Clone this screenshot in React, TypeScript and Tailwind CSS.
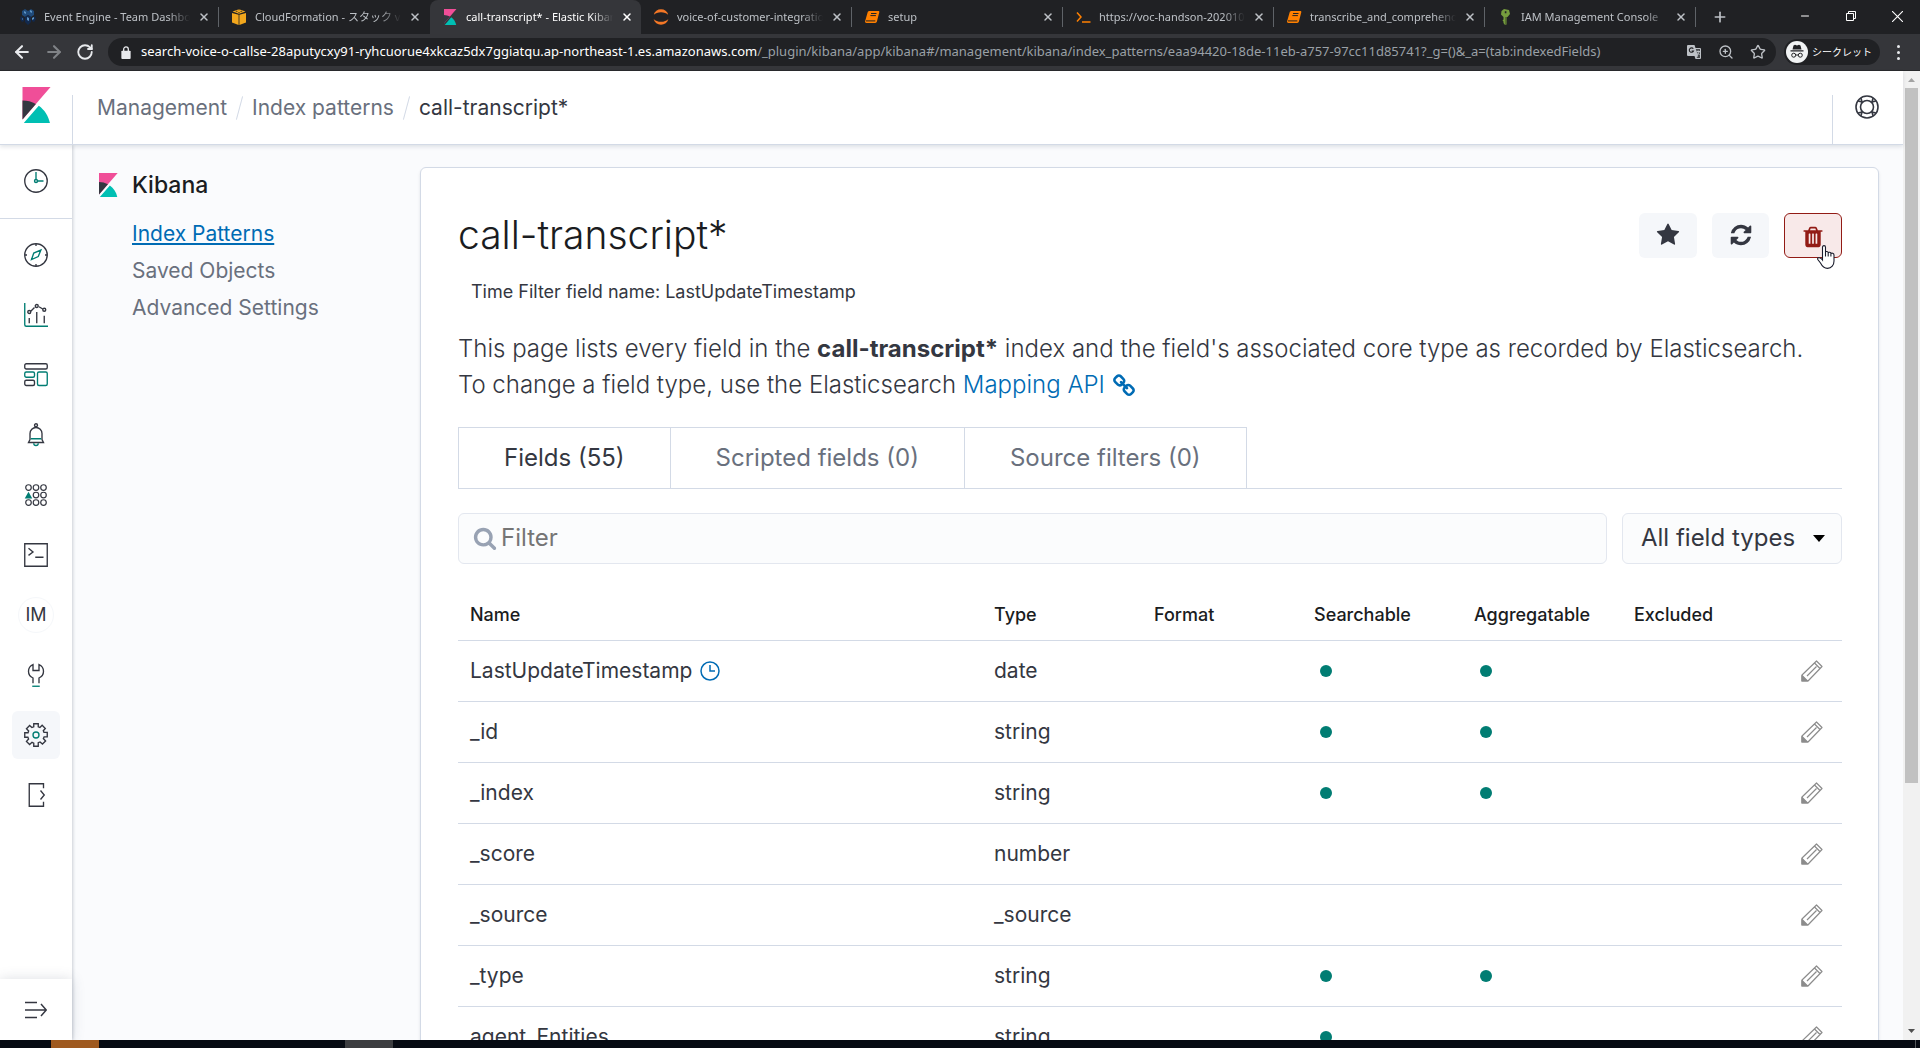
import type { ReactNode } from 'react';
import { ArrowLeft, ArrowRight, RotateCw, Star, ZoomIn, X, Plus, Minus } from 'lucide-react';

const chromeFont = "font-['Noto_Sans','Noto_Sans_CJK_JP',sans-serif]";

/* ---------- logos ---------- */

function KibanaLogo({ className }: { className: string }) {
  return (
    <svg viewBox="0 0 32 32" className={className} aria-hidden="true">
      <path fill="#F04E98" d="M4 0v28.789L28.935.017z" />
      <path fill="#343741" d="M4 12v16.789l11.906-13.738A24.721 24.721 0 004 12" />
      <path fill="#00BFB3" d="M18.479 16.664L6.268 30.754l-1.073 1.237h23.191c-1.252-6.292-4.883-11.719-9.908-15.327" />
    </svg>
  );
}

function EventEngineFavicon() {
  return (
    <svg viewBox="0 0 16 16" className="size-4">
      <path fill="#1f4a7a" d="M5 0l3 2v4L5 8 2 6V2zM11 0l3 2v4l-3 2-3-2V2z" />
      <path fill="#12294d" d="M8 6l3 2v5l-3 3-3-3V8zM1 7l3 2v3l-2 1-2-3zM15 7l-3 2v3l2 1 2-3z" />
      <path fill="#5d93c4" d="M4 2l2 1v2L4 4zM10 1l2 1v2l-2-1zM7 8l2 1v3L7 11zM12 9l2-1v2l-2 1zM2 9l1 1v1l-1-1z" />
    </svg>
  );
}

function AwsFavicon() {
  return (
    <svg viewBox="0 0 16 16" className="size-4">
      <path fill="#F2A71D" d="M1 4l6.600 1.800V16L1 13.500zM15 4L8.400 5.800V16L15 13.500zM8 .2L14.500 2.500 8 4.700 1.500 2.500z" />
      <path fill="#202124" d="M4.500 2.200l1.200-.4 1.300.5-1.200.4zM9 2.300l1.300-.5 1.200.4-1.300.5zM7 1l1-.4 1 .4-1 .3zM7 3.500l1-.4 1 .4-1 .4z" />
    </svg>
  );
}

function JupyterFavicon() {
  return (
    <svg viewBox="0 0 16 16" className="size-4">
      <path fill="#F37726" d="M.6 6C1.600 2.200 4.500.3 8 .3s6.400 1.900 7.400 5.700C13.600 4.100 11 3.200 8 3.200S2.400 4.100.6 6z" />
      <path fill="#F37726" d="M.6 10c1 3.800 3.900 5.700 7.400 5.700s6.400-1.900 7.400-5.700c-1.800 1.900-4.400 2.800-7.400 2.800S2.400 11.900.6 10z" />
    </svg>
  );
}

function BookFavicon() {
  return (
    <svg viewBox="0 0 16 16" className="size-4">
      <path fill="#FF8000" d="M5.500 2h8.800c.9 0 1.200.6 1 1.300l-2.400 9.300c-.2.800-.8 1.400-1.700 1.400H2.500c-.9 0-1.700-.7-1.400-1.700L3.600 3.400C3.800 2.600 4.600 2 5.500 2z" />
      <path stroke="#202124" strokeWidth="1" fill="none" d="M7 4.500h5.500M6.400 6.600h5.500M2 11.900h9.300" />
    </svg>
  );
}

function TerminalFavicon() {
  return (
    <svg viewBox="0 0 16 16" className="size-4" fill="none" stroke="#FF8000" strokeWidth="1.500">
      <path d="M2 3.500L6 8l-4 4.500M7 13h8.500" />
    </svg>
  );
}

function KeyFavicon() {
  return (
    <svg viewBox="0 0 16 16" className="size-4">
      <path fill="#759C3E" fillRule="evenodd" d="M7 0l5 1 1 4-2.500 3H10v7l-2 1-1.500-2V12.500l-1-1 1-1V8L4 5.500 4.500 2zM7.800 2.200v2h1.600v-2z" />
      <path fill="#4B612C" d="M8.300 8h1.700v7l-1.700 1z" />
    </svg>
  );
}

/* ---------- browser ---------- */

type Tab = { title: string; icon: ReactNode; active?: boolean; rule?: boolean };

const tabs: Tab[] = [
  { title: 'Event Engine - Team Dashbo', icon: <EventEngineFavicon />, rule: true },
  { title: 'CloudFormation - スタック vo', icon: <AwsFavicon /> },
  { title: 'call-transcript* - Elastic Kibana', icon: <KibanaLogo className="size-4" />, active: true },
  { title: 'voice-of-customer-integratio', icon: <JupyterFavicon />, rule: true },
  { title: 'setup', icon: <BookFavicon />, rule: true },
  { title: 'https://voc-handson-202010', icon: <TerminalFavicon />, rule: true },
  { title: 'transcribe_and_comprehend', icon: <BookFavicon />, rule: true },
  { title: 'IAM Management Console', icon: <KeyFavicon />, rule: true },
];

function TabStrip() {
  return (
    <div className="flex h-[34px] items-stretch bg-[#202124] pl-2 text-[#bdc1c6]">
      {tabs.map((tab, i) => (
        <div
          key={i}
          className={
            tab.active
              ? 'flex min-w-0 flex-[0_1_211px] items-center gap-2 rounded-t-lg bg-[#35363a] pr-2 pl-3 text-white'
              : 'flex min-w-0 flex-[0_1_211px] items-center gap-2 pl-3'
          }
        >
          <span className="shrink-0">{tab.icon}</span>
          <span className="flex-1 overflow-hidden text-[11px] whitespace-nowrap [mask-image:linear-gradient(to_right,black_85%,transparent)]">
            {tab.title}
          </span>
          <button aria-label={`Close ${tab.title}`} className="shrink-0">
            <X className="size-3" strokeWidth={3} />
          </button>
          {!tab.active && <span className={tab.rule ? 'h-5 w-px bg-[#5f6368]' : 'h-5 w-px'} />}
        </div>
      ))}
      <button aria-label="New tab" className="pl-4">
        <Plus className="size-4" strokeWidth={2.5} />
      </button>
      <div className="ml-auto flex h-8 items-center text-white">
        <button aria-label="Minimize" className="flex w-[46px] justify-center">
          <Minus className="size-3" />
        </button>
        <button aria-label="Restore" className="flex w-[46px] justify-center">
          <svg viewBox="0 0 10 10" className="size-[10px]" fill="none" stroke="currentColor">
            <path d="M.5 2.500h7v7h-7zM2.500 2.500v-2h7v7h-2" />
          </svg>
        </button>
        <button aria-label="Close window" className="flex w-[46px] justify-center">
          <svg viewBox="0 0 10 10" className="size-[11px]" fill="none" stroke="currentColor">
            <path d="M0 0l10 10M10 0L0 10" />
          </svg>
        </button>
      </div>
    </div>
  );
}

function TranslateIcon() {
  return (
    <svg viewBox="0 0 16 16" className="size-4">
      <path fill="#bdc1c6" d="M2 1h6.500l1 3H14a1 1 0 011 1v9a1 1 0 01-1 1H9.500l-1-3H2a1 1 0 01-1-1V2a1 1 0 011-1z" />
      <path fill="#202124" d="M9.800 5H14v9h-3.500l1.500-2z" opacity=".75" />
      <path fill="none" stroke="#202124" strokeWidth="1.100" d="M7.300 4.800A2.200 2.200 0 107.500 7H5.600" />
      <path fill="none" stroke="#bdc1c6" d="M10.500 7.500h3.500M12.200 6.500v1M13.300 7.500c-.3 1.500-1.300 2.600-2.300 3.300M11 8.500l2.500 2.500" />
    </svg>
  );
}

function IncognitoBadge() {
  return (
    <svg viewBox="0 0 22 22" className="size-[22px] shrink-0">
      <circle cx="11" cy="11" r="11" fill="#f1f3f4" />
      <path fill="#202124" d="M7.500 4.500l1.500-.7 2 .6 2-.6 1.500.7 1 4h-9zM4.500 9.200h13v1.200h-13z" />
      <g fill="none" stroke="#202124">
        <circle cx="7.700" cy="14.200" r="2" />
        <circle cx="14.300" cy="14.200" r="2" />
        <path d="M9.700 14h2.600" />
      </g>
    </svg>
  );
}

function Toolbar() {
  return (
    <div className="flex h-[37px] items-center gap-2 border-b border-[#28292c] bg-[#35363a] pr-3 pl-3 text-[#e8eaed]">
      <button aria-label="Back" className="w-6">
        <ArrowLeft className="size-5" strokeWidth={2.5} />
      </button>
      <button aria-label="Forward" className="w-6 text-[#808387]">
        <ArrowRight className="size-5" strokeWidth={2.5} />
      </button>
      <button aria-label="Reload" className="w-6">
        <RotateCw className="size-[18px]" strokeWidth={2.5} />
      </button>
      <div className="flex h-7 min-w-0 flex-1 items-center rounded-full bg-[#202124] pr-[10px] pl-[13px]">
        <svg viewBox="0 0 10 14" className="h-[13px] w-[10px] shrink-0">
          <rect y="5" width="10" height="9" rx="1" fill="#e8eaed" />
          <path d="M2.500 6V3.500a2.500 2.500 0 015 0V6" fill="none" stroke="#e8eaed" strokeWidth="1.400" />
        </svg>
        <div className="ml-[10px] min-w-0 flex-1 text-[13px] whitespace-nowrap text-[#9aa0a6]">
          <span className="text-white">search-voice-o-callse-28aputycxy91-ryhcuorue4xkcaz5dx7ggiatqu.ap-northeast-1.es.amazonaws.com</span>
          /_plugin/kibana/app/kibana#/management/kibana/index_patterns/eaa94420-18de-11eb-a757-97cc11d85741?_g=()&amp;_a=(tab:indexedFields)
        </div>
        <div className="flex shrink-0 items-center gap-4 text-[#bdc1c6]">
          <button aria-label="Translate"><TranslateIcon /></button>
          <button aria-label="Zoom"><ZoomIn className="size-4" /></button>
          <button aria-label="Bookmark"><Star className="size-4" /></button>
        </div>
      </div>
      <div className="flex h-[26px] items-center gap-1 rounded-full bg-[#202124] pr-2 pl-[2px] text-[10px] whitespace-nowrap text-white">
        <IncognitoBadge />
        <span>シークレット</span>
      </div>
      <button aria-label="Chrome menu" className="flex w-5 flex-col items-center gap-[3px]">
        <span className="size-[3px] rounded-full bg-current" />
        <span className="size-[3px] rounded-full bg-current" />
        <span className="size-[3px] rounded-full bg-current" />
      </button>
    </div>
  );
}

/* ---------- side navigation icons ---------- */

const ink = '#343741';
const teal = '#017D73';

function NavSvg({ children }: { children: ReactNode }) {
  return (
    <svg viewBox="0 0 32 32" className="size-6" fill="none" stroke={ink} strokeWidth="1.800" aria-hidden="true">
      {children}
    </svg>
  );
}

const gearPath =
  'M13 1h6v4.200l2.200.9 3-3 4.200 4.200-2.700 3 .9 2.200H31v6h-4.200l-1 2.200 3 3.200-4.200 4.200-3.200-2.800-2.400.9V31h-6v-4.200l-2.300-1-3.200 2.900-4.200-4.200 2.800-3.100-.9-2.400H1v-6h4.400l.8-2.400-2.900-3L7.500 3.300l3 2.800 2.500-.9z';

const navIcons: Record<string, ReactNode> = {
  recent: (
    <NavSvg>
      <circle cx="16" cy="16" r="15" />
      <g stroke={teal}>
        <circle cx="16" cy="16" r="2" />
        <path d="M16 14V4M18 16h8" />
      </g>
    </NavSvg>
  ),
  discover: (
    <NavSvg>
      <circle cx="16" cy="16" r="15" />
      <path d="M16 1v3M16 28v3M1 16h3M28 16h3" />
      <path stroke={teal} d="M10 22l3-8.500L22.500 9.500 19 18z" />
    </NavSvg>
  ),
  visualize: (
    <NavSvg>
      <path stroke={teal} d="M1 0v29a2 2 0 002 2h29" />
      <path d="M7 20v7M17 12v15M27 17v10M9 11l5-5M20 5l5 3" />
      <circle cx="7" cy="12" r="2" />
      <circle cx="17" cy="4" r="2" />
      <circle cx="27" cy="9" r="2" />
    </NavSvg>
  ),
  dashboard: (
    <NavSvg>
      <rect x="1" y="1" width="30" height="7" rx="2" />
      <rect x="1" y="23" width="13" height="7" rx="2" />
      <rect x="1" y="12" width="13" height="7" rx="2" stroke={teal} />
      <rect x="18" y="12" width="13" height="18" rx="2" stroke={teal} />
    </NavSvg>
  ),
  alerting: (
    <NavSvg>
      <circle cx="16" cy="3" r="2" />
      <path d="M6 26l2-4v-8a8 8 0 0116 0v8l2 4z" />
      <path stroke={teal} d="M9 21h14M13 27a3 3 0 006 0" />
    </NavSvg>
  ),
  anomaly: (
    <NavSvg>
      {[6, 16, 26].map((y) =>
        [6, 16, 26].map((x) => (x === 6 && y === 16 ? null : <circle key={`${x}-${y}`} cx={x} cy={y} r="3.700" strokeWidth="1.600" />)),
      )}
      <path fill={teal} stroke="none" d="M6 11.500l5 9H1z" />
    </NavSvg>
  ),
  console: (
    <NavSvg>
      <path d="M1 1h30v30H1zM6 7l6 5-6 4.500M15 19h11" />
    </NavSvg>
  ),
  tools: (
    <NavSvg>
      <path d="M20 27v-7c3.500-1.500 6-4.500 6-9 0-4-2-7-6-9v8h-8V2c-4 2-6 5-6 9 0 4.500 2.500 7.500 6 9v7" />
      <path stroke={teal} d="M11 31h10" />
    </NavSvg>
  ),
  management: (
    <NavSvg>
      <path d={gearPath} />
      <circle cx="16" cy="16" r="4" stroke={teal} />
    </NavSvg>
  ),
  logout: (
    <NavSvg>
      <path d="M26 7V1H7v30h19v-6M22 10l5 6-5 6" />
    </NavSvg>
  ),
};

const navItems = [
  { id: 'discover', label: 'Discover' },
  { id: 'visualize', label: 'Visualize' },
  { id: 'dashboard', label: 'Dashboard' },
  { id: 'alerting', label: 'Alerting' },
  { id: 'anomaly', label: 'Anomaly Detection' },
  { id: 'console', label: 'Console' },
  { id: 'im', label: 'Index Management' },
  { id: 'tools', label: 'Dev Tools' },
  { id: 'management', label: 'Management' },
  { id: 'logout', label: 'Log out' },
];

function SideNav() {
  return (
    <nav className="z-10 flex w-[72px] shrink-0 flex-col bg-white shadow-[1px_0_3px_rgba(65,78,101,0.25)]">
      <div className="flex h-[74px] items-center justify-center border-b border-[#d3dae6] pb-[2px]">
        <button aria-label="Recently viewed">{navIcons.recent}</button>
      </div>
      <ul className="flex flex-1 flex-col items-center gap-3 pt-3">
        {navItems.map((item) => (
          <li key={item.id}>
            <a
              href={`#${item.id}`}
              aria-label={item.label}
              className={
                item.id === 'management'
                  ? 'flex size-12 items-center justify-center rounded-md bg-[#f5f7fa]'
                  : 'flex size-12 items-center justify-center'
              }
            >
              {item.id === 'im' ? (
                <span className="flex size-9 items-center justify-center rounded-full border border-[#f5f7fa] text-lg text-[#343741]">IM</span>
              ) : (
                navIcons[item.id]
              )}
            </a>
          </li>
        ))}
      </ul>
      <button aria-label="Expand navigation" className="flex h-[61px] items-center justify-center bg-white shadow-[0_0_12px_rgba(65,78,101,0.18)]">
        <svg viewBox="0 0 22 18" className="h-[18px] w-[22px]" fill="none" stroke={ink} strokeWidth="1.500">
          <path d="M0 1.500h12M0 9h21M0 16.500h12M16 3l5.300 6L16 15" />
        </svg>
      </button>
    </nav>
  );
}

/* ---------- page header ---------- */

function Header() {
  return (
    <header className="z-20 flex h-[74px] shrink-0 items-stretch border-b border-[#d3dae6] bg-white shadow-[0_2px_4px_rgba(65,78,101,0.15)]">
      <a href="#home" aria-label="Kibana home" className="flex w-[72px] items-center justify-center pb-[6px]">
        <KibanaLogo className="size-9" />
      </a>
      <div className="mt-6 w-px bg-[#d3dae6]" />
      <nav aria-label="Breadcrumb" className="flex flex-1 items-center gap-3 pl-6 text-[21px] text-[#69707d]">
        <a href="#management">Management</a>
        <span className="h-6 w-px rotate-[15deg] bg-[#d3dae6]" />
        <a href="#patterns">Index patterns</a>
        <span className="h-6 w-px rotate-[15deg] bg-[#d3dae6]" />
        <span className="text-[#343741]">call-transcript*</span>
      </nav>
      <div className="mt-6 w-px bg-[#d3dae6]" />
      <button aria-label="Help" className="flex w-[70px] items-center justify-center pr-[2px] pb-[2px]">
        <svg viewBox="0 0 24 24" className="size-6" fill="none" stroke={ink} strokeWidth="1.600">
          <circle cx="12" cy="12" r="11" />
          <circle cx="12" cy="12" r="6.500" />
          <path d="M3.200 6l4.600 1.200M6 3.200l1.200 4.600M20.800 6l-4.600 1.200M18 3.200l-1.200 4.600M3.200 18l4.600-1.200M6 20.800l1.200-4.600M20.800 18l-4.600-1.200M18 20.800l-1.200-4.600" />
        </svg>
      </button>
    </header>
  );
}

function Sidebar() {
  return (
    <aside className="w-[348px] shrink-0 pt-[22px] pl-6">
      <h2 className="flex items-center gap-3 text-[23px] leading-9 font-medium text-[#1a1c21]">
        <KibanaLogo className="size-6" />
        Kibana
      </h2>
      <ul className="mt-3 ml-9 text-[21px] leading-[37px] text-[#69707d]">
        <li><a href="#patterns" className="text-[#006bb4] underline decoration-2 underline-offset-2">Index Patterns</a></li>
        <li><a href="#objects">Saved Objects</a></li>
        <li><a href="#settings">Advanced Settings</a></li>
      </ul>
    </aside>
  );
}

/* ---------- main panel ---------- */

function Glyph({ d, className }: { d: string; className: string }) {
  return (
    <svg viewBox="0 0 1792 1792" className={className} fill="currentColor" aria-hidden="true">
      <path d={d} />
    </svg>
  );
}

const glyphs = {
  star: 'M1728 647q0 22-26 48l-363 354 86 500q1 7 1 20 0 21-10.5 35.5t-30.5 14.5q-19 0-40-12l-449-236-449 236q-22 12-40 12-21 0-31.5-14.5t-10.5-35.5q0-6 2-20l86-500-364-354q-25-27-25-48 0-37 56-46l502-73 225-455q19-41 49-41t49 41l225 455 502 73q56 9 56 46z',
  refresh:
    'M1639 1056q0 5-1 7-64 268-268 434.5t-478 166.5q-146 0-282.5-55t-243.5-157l-129 129q-19 19-45 19t-45-19-19-45v-448q0-26 19-45t45-19h448q26 0 45 19t19 45-19 45l-137 137q71 66 161 102t187 36q134 0 250-65t186-179q11-17 53-117 8-23 30-23h192q13 0 22.5 9.5t9.5 22.5zm25-800v448q0 26-19 45t-45 19h-448q-26 0-45-19t-19-45 19-45l138-138q-148-137-349-137-134 0-250 65t-186 179q-11 17-53 117-8 23-30 23h-199q-13 0-22.5-9.5t-9.5-22.5v-7q65-268 270-434.5t480-166.5q146 0 284 55.5t245 156.5l130-129q19-19 45-19t45 19 19 45z',
  trash:
    'M704 1376v-704q0-14-9-23t-23-9h-64q-14 0-23 9t-9 23v704q0 14 9 23t23 9h64q14 0 23-9t9-23zm256 0v-704q0-14-9-23t-23-9h-64q-14 0-23 9t-9 23v704q0 14 9 23t23 9h64q14 0 23-9t9-23zm256 0v-704q0-14-9-23t-23-9h-64q-14 0-23 9t-9 23v704q0 14 9 23t23 9h64q14 0 23-9t9-23zm-544-992h448l-48-117q-7-9-17-11h-317q-10 2-17 11zm928 32v64q0 14-9 23t-23 9h-96v948q0 83-47 143.5t-113 60.5h-832q-66 0-113-58.5t-47-141.500v-952h-96q-14 0-23-9t-9-23v-64q0-14 9-23t23-9h309l70-167q15-37 54-63t79-26h320q40 0 79 26t54 63l70 167h309q14 0 23 9t9 23z',
  search:
    'M1216 832q0-185-131.5-316.5t-316.5-131.5-316.5 131.5-131.5 316.5 131.5 316.5 316.5 131.5 316.5-131.5 131.5-316.5zm512 832q0 52-38 90t-90 38q-54 0-90-38l-343-342q-179 124-399 124-143 0-273.5-55.5t-225-150-150-225-55.5-273.5 55.5-273.5 150-225 225-150 273.5-55.5 273.5 55.5 225 150 150 225 55.5 273.500q0 220-124 399l343 343q37 37 37 90z',
  link: 'M1520 1216q0-40-28-68l-208-208q-28-28-68-28-42 0-72 32 3 3 19 18.5t21.5 21.5 15 19 13 25.5 3.5 27.5q0 40-28 68t-68 28q-15 0-27.5-3.5t-25.5-13-19-15-21.5-21.5-18.5-19q-33 31-33 73 0 40 28 68l206 207q27 27 68 27 40 0 68-26l147-146q28-28 28-67zm-703-705q0-40-28-68l-206-207q-28-28-68-28-39 0-68 27l-147 146q-28 28-28 67 0 40 28 68l208 208q27 27 68 27 42 0 72-31-3-3-19-18.5t-21.5-21.5-15-19-13-25.5-3.5-27.5q0-40 28-68t68-28q15 0 27.5 3.5t25.5 13 19 15 21.5 21.5 18.5 19q33-31 33-73zm895 705q0 120-85 203l-147 146q-83 83-203 83-121 0-204-85l-206-207q-83-83-83-203 0-123 88-209l-88-88q-86 88-208 88-120 0-204-84l-208-208q-84-84-84-204t85-203l147-146q83-83 203-83 121 0 204 85l206 207q83 83 83 203 0 123-88 209l88 88q86-88 208-88 120 0 204 84l208 208q84 84 84 204z',
};

function HandCursor() {
  return (
    <svg viewBox="0 0 18 24" className="absolute top-8 left-[33px] h-6 w-[18px]" aria-hidden="true">
      <path
        fill="#fff"
        stroke="#1a1c2c"
        strokeWidth="1.100"
        d="M5.500 14V2.300C5.500 1.200 6 .6 7 .6s1.500.6 1.500 1.700V7c.3-.7 2.400-.7 2.700.6.500-.7 2.400-.5 2.700.9.700-.7 3.100-.4 3.100 1.500v6c0 4-2.500 7.400-6.500 7.400-4 0-5.500-2.400-7-5.400L.8 14.500c-.6-1.400.6-2.300 1.800-1.700 1 .4 2 1 2.900 2.200zM8.500 7v4.500M11.200 8v3.500M13.900 9v2.500"
      />
    </svg>
  );
}

function PencilIcon() {
  return (
    <svg viewBox="0 0 22 22" className="size-[22px]" fill="none" stroke="#8c8c8c" strokeWidth="1.200" strokeLinejoin="round" aria-hidden="true">
      <path d="M1 15L15.500 1 21 6.500 7 21H1zM13.500 3L19 8.500M6 16l9.500-9.500" />
      <path fill="#8c8c8c" d="M1 15.500L6.500 21H1z" />
    </svg>
  );
}

const fields = [
  { name: 'LastUpdateTimestamp', type: 'date', searchable: true, aggregatable: true, time: true },
  { name: '_id', type: 'string', searchable: true, aggregatable: true },
  { name: '_index', type: 'string', searchable: true, aggregatable: true },
  { name: '_score', type: 'number' },
  { name: '_source', type: '_source' },
  { name: '_type', type: 'string', searchable: true, aggregatable: true },
  { name: 'agent_Entities', type: 'string', searchable: true },
];

function Dot({ label }: { label: string }) {
  return <span role="img" aria-label={label} className="ml-[6px] block size-3 rounded-full bg-[#017d73]" />;
}

function FieldsTable() {
  return (
    <table className="mt-[26px] w-full table-fixed border-collapse text-left text-[21px] text-[#343741]">
      <colgroup>
        <col />
        <col className="w-40" />
        <col className="w-40" />
        <col className="w-40" />
        <col className="w-40" />
        <col className="w-40" />
        <col className="w-[60px]" />
      </colgroup>
      <thead>
        <tr className="h-[50px] border-b border-[#d3dae6] text-lg text-[#1a1c21]">
          {['Name', 'Type', 'Format', 'Searchable', 'Aggregatable', 'Excluded', ''].map((h, i) => (
            <th key={i} className="px-3 font-medium whitespace-nowrap">{h}</th>
          ))}
        </tr>
      </thead>
      <tbody>
        {fields.map((f) => (
          <tr key={f.name} className="h-[61px] border-b border-[#d3dae6]">
            <td className="px-3">
              <span className="flex items-center gap-2">
                {f.name}
                {f.time && (
                  <svg viewBox="0 0 20 20" className="size-5" fill="none" stroke="#006bb4" strokeWidth="1.500">
                    <circle cx="10" cy="10" r="9" />
                    <path d="M10 4v6h5" />
                  </svg>
                )}
              </span>
            </td>
            <td className="px-3">{f.type}</td>
            <td />
            <td className="px-3">{f.searchable && <Dot label="Searchable" />}</td>
            <td className="px-3">{f.aggregatable && <Dot label="Aggregatable" />}</td>
            <td />
            <td>
              <button aria-label={`Edit ${f.name}`} className="mx-auto flex">
                <PencilIcon />
              </button>
            </td>
          </tr>
        ))}
      </tbody>
    </table>
  );
}

const panelTabs = ['Fields (55)', 'Scripted fields (0)', 'Source filters (0)'];

function Panel() {
  return (
    <main className="mt-[22px] mr-6 flex-1 self-start rounded-md border border-[#d3dae6] bg-white px-9 pt-9 pl-[37px] shadow-[0_2px_3px_rgba(65,78,101,0.15)]">
      <div className="flex h-[62px] items-center justify-between">
        <h1 className="text-[39px] font-light text-[#1a1c21]">call-transcript*</h1>
        <div className="flex gap-[15px] text-[#343741]">
          <button aria-label="Set as default index" className="flex h-[45px] w-[58px] items-center justify-center rounded-md bg-[#f5f7fa]">
            <Glyph d={glyphs.star} className="size-6" />
          </button>
          <button aria-label="Refresh field list" className="flex h-[45px] w-[57px] items-center justify-center rounded-md bg-[#f5f7fa]">
            <Glyph d={glyphs.refresh} className="size-6" />
          </button>
          <div className="relative">
            <button aria-label="Remove index pattern" className="flex h-[45px] w-[58px] items-center justify-center rounded-md border border-[#921b15] bg-[#f8e9e9] pt-1 text-[#921b15]">
              <Glyph d={glyphs.trash} className="size-6" />
            </button>
            <HandCursor />
          </div>
        </div>
      </div>
      <p className="mt-3 px-[13px] text-lg leading-[27px] text-[#343741]">Time Filter field name: LastUpdateTimestamp</p>
      <p className="mt-[26px] text-2xl leading-9 font-[350] text-[#343741]">
        This page lists every field in the <strong className="font-bold">call-transcript*</strong> index and the field's associated core type as
        recorded by Elasticsearch.
        <br />
        To change a field type, use the Elasticsearch{' '}
        <a href="#mapping" className="text-[#006bb4]">
          Mapping API <Glyph d={glyphs.link} className="inline size-6 align-middle" />
        </a>
      </p>
      <div role="tablist" className="mt-6 flex border-b border-[#d3dae6]">
        {panelTabs.map((t, i) => (
          <button
            key={t}
            role="tab"
            aria-selected={i === 0}
            className={
              i === 0
                ? 'h-[61px] border-x border-t border-[#d3dae6] px-[45px] text-2xl text-[#343741]'
                : 'h-[61px] border-t border-r border-[#d3dae6] px-[45px] text-2xl text-[#69707d]'
            }
          >
            {t}
          </button>
        ))}
      </div>
      <div className="mt-6 flex gap-[15px]">
        <label className="flex h-[51px] flex-1 items-center gap-1 rounded-md border border-[#e3e7ef] bg-[#fbfcfd] pb-[2px] pl-[14px] text-[#98a2b3]">
          <Glyph d={glyphs.search} className="size-6" />
          <input aria-label="Filter" placeholder="Filter" className="min-w-0 flex-1 bg-transparent text-2xl text-[#343741] outline-none placeholder:text-[#757575]" />
        </label>
        <div className="relative w-[220px]">
          <select
            aria-label="Field type"
            className="h-[51px] w-full appearance-none rounded-md border border-[#e3e7ef] bg-[#fbfcfd] pb-[2px] pl-[18px] text-2xl text-[#343741]"
          >
            <option>All field types</option>
            <option>string</option>
            <option>number</option>
            <option>date</option>
          </select>
          <svg viewBox="0 0 14 8" className="pointer-events-none absolute top-[22px] right-[17px] h-[7px] w-3">
            <path d="M0 0h14L7 8z" />
          </svg>
        </div>
      </div>
      <FieldsTable />
    </main>
  );
}

function Scrollbar() {
  return (
    <div className="flex w-[17px] shrink-0 flex-col items-center bg-[#f1f1f1]">
      <svg viewBox="0 0 17 17" className="size-[17px]"><path fill="#a3a3a3" d="M5 11h7L8.500 7z" /></svg>
      <div className="w-[13px] flex-[695] bg-[#c1c1c1]" />
      <div className="flex-[240]" />
      <svg viewBox="0 0 17 17" className="size-[17px]"><path fill="#505050" d="M5 6h7l-3.500 4z" /></svg>
    </div>
  );
}

function Taskbar() {
  return (
    <footer className="flex h-2 shrink-0 items-stretch overflow-hidden bg-[#060a12] pl-[51px]">
      <div className="w-12 bg-[#9f5a20]" />
      <div className="ml-[246px] w-12 bg-[#3c3d40]" />
      <div className="mr-1 ml-auto w-px bg-[#55585c]" />
    </footer>
  );
}

export default function App() {
  return (
    <div className="flex h-screen flex-col overflow-hidden bg-white">
      <div className={chromeFont}>
        <TabStrip />
        <Toolbar />
      </div>
      <div className="flex min-h-0 flex-1 font-['Inter',sans-serif]">
        <div className="flex min-w-0 flex-1 flex-col">
          <Header />
          <div className="flex min-h-0 flex-1 overflow-hidden">
            <SideNav />
            <div className="flex min-w-0 flex-1 overflow-hidden bg-[#fafbfd]">
              <Sidebar />
              <Panel />
            </div>
          </div>
        </div>
        <Scrollbar />
      </div>
      <Taskbar />
    </div>
  );
}
